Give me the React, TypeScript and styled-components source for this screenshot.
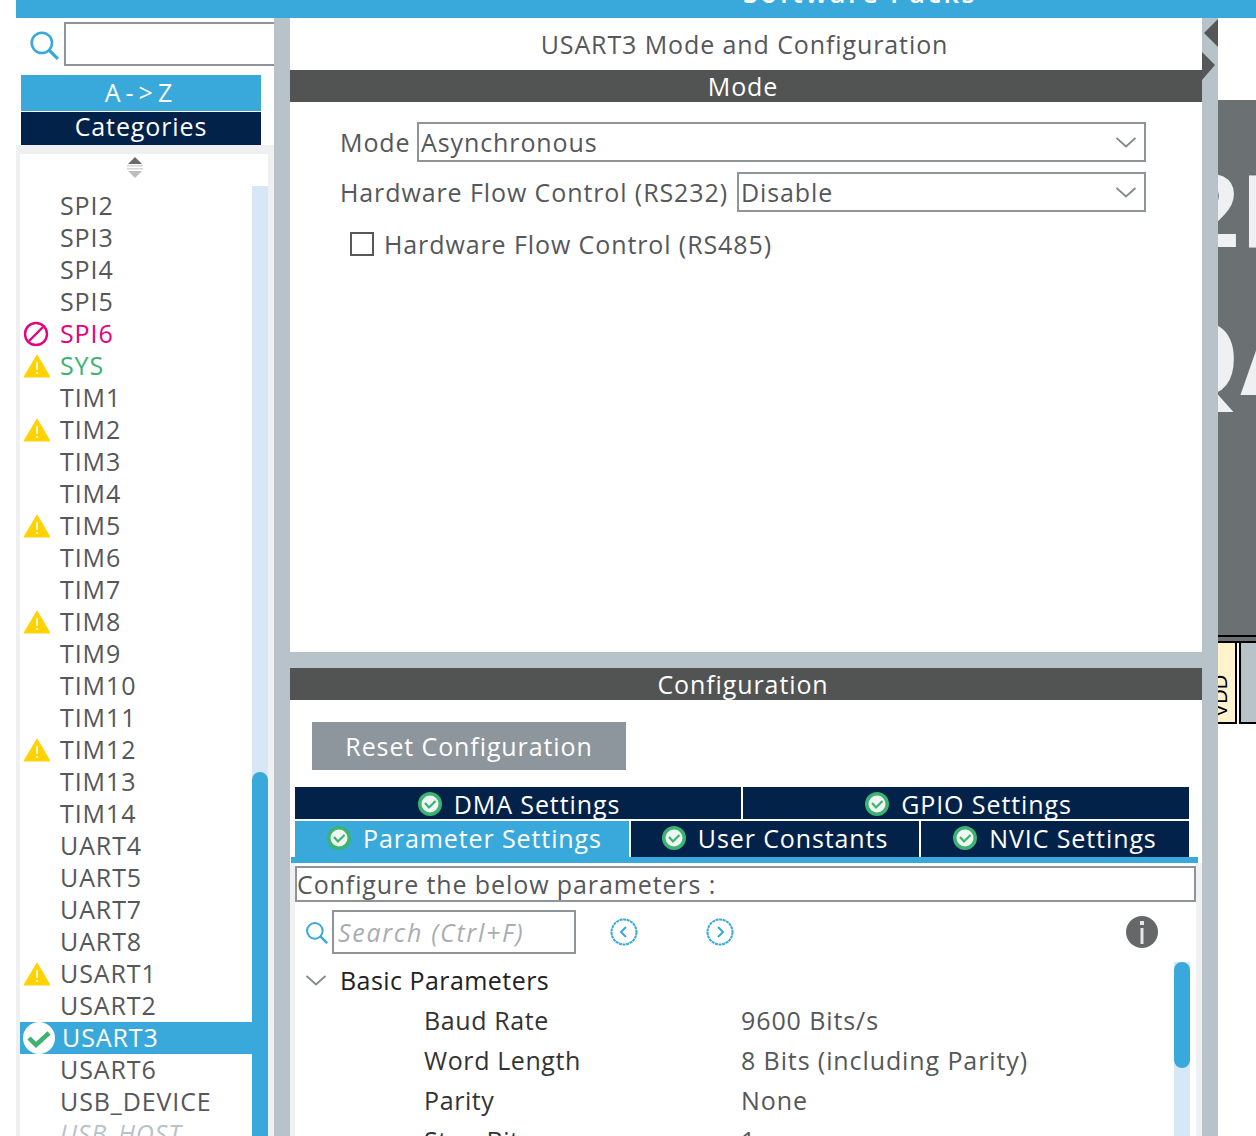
import styled, { createGlobalStyle } from 'styled-components'

const Global = createGlobalStyle`
  html, body {
    margin: 0;
    padding: 0;
    background: #fff;
  }
  * {
    box-sizing: border-box;
  }
  svg {
    flex: none;
  }
`

const BLUE = '#39a9dc'
const NAVY = '#02224a'
const GREY_TEXT = '#555759'
const SPLIT = '#b7c2c9'

const Page = styled.div`
  width: 1256px;
  height: 1136px;
  overflow: hidden;
  padding-left: 16px;
  background: #fff;
  font-family: 'Open Sans', 'Noto Sans', sans-serif;
  font-size: 25px;
  letter-spacing: 0.9px;
  color: ${GREY_TEXT};
`
const TopBar = styled.div`
  height: 18px;
  overflow: hidden;
  background: ${BLUE};
  color: #fff;
  padding-left: 727px;
  font-size: 27px;
  font-weight: 600;
  line-height: 32px;
  letter-spacing: 2.6px;
`
const TopLabel = styled.div`
  margin-top: -23px;
`
const Body = styled.div`
  display: flex;
  height: 1118px;
`
const LeftPanel = styled.div`
  width: 258px;
  flex: none;
  display: flex;
  flex-direction: column;
  overflow: hidden;
`
const SearchRow = styled.div`
  height: 57px;
  display: flex;
  align-items: flex-start;
  padding: 4px 0 0 13px;
  gap: 5px;
`
const SearchIconSlot = styled.div`
  display: flex;
  padding-top: 8px;
`
const SearchBox = styled.div`
  width: 214px;
  height: 44px;
  flex: none;
  border: 2px solid #8f9499;
  background: #fff;
`
const SortButton = styled.div<{ $active?: boolean }>`
  width: 240px;
  margin-left: 5px;
  height: ${(p) => (p.$active ? 36 : 33)}px;
  margin-bottom: ${(p) => (p.$active ? 1 : 0)}px;
  background: ${(p) => (p.$active ? BLUE : NAVY)};
  color: #fff;
  text-align: center;
  line-height: ${(p) => (p.$active ? 34 : 29)}px;
  letter-spacing: ${(p) => (p.$active ? 5 : 0.9)}px;
`
const ListFrame = styled.div`
  flex: 1;
  min-height: 0;
  background: #eff0f2;
  padding: 9px 6px 0 4px;
`
const ListInner = styled.div`
  height: 100%;
  display: flex;
  background: #fff;
`
const ListColumn = styled.div`
  width: 232px;
  flex: none;
`
const SortArrows = styled.div`
  height: 36px;
  display: flex;
  justify-content: center;
  padding: 3px 2px 0 0;
`
const Row = styled.div<{ $selected?: boolean }>`
  height: 32px;
  display: flex;
  align-items: center;
  background: ${(p) => (p.$selected ? BLUE : 'transparent')};
`
const RowIcon = styled.div`
  width: 40px;
  flex: none;
  display: flex;
  padding-left: 3px;
  align-items: center;
`
const RowLabel = styled.span<{ $tone: string }>`
  line-height: 30px;
  margin-bottom: 2px;
  color: ${(p) =>
    p.$tone === 'error'
      ? '#e6007e'
      : p.$tone === 'ok'
        ? '#3cb371'
        : p.$tone === 'selected'
          ? '#fff'
          : p.$tone === 'disabled'
            ? '#b7c2c9'
            : GREY_TEXT};
  font-style: ${(p) => (p.$tone === 'disabled' ? 'italic' : 'normal')};
  margin-left: ${(p) => (p.$tone === 'selected' ? 2 : 0)}px;
`
const ListTrack = styled.div`
  width: 16px;
  flex: none;
  margin-top: 32px;
  background: #d8e7f5;
`
const ListThumb = styled.div`
  height: 400px;
  margin-top: 586px;
  background: ${BLUE};
  border-radius: 8px 8px 0 0;
`
const SplitV = styled.div`
  width: 16px;
  flex: none;
  background: ${SPLIT};
  overflow: hidden;
`
const Center = styled.div`
  width: 912px;
  flex: none;
  display: flex;
  flex-direction: column;
`
const ModePane = styled.div`
  height: 634px;
  flex: none;
`
const PaneTitle = styled.div`
  height: 52px;
  line-height: 52px;
  text-align: center;
  padding-right: 3px;
`
const SectionBar = styled.div`
  height: 32px;
  background: #525453;
  color: #fff;
  text-align: center;
  line-height: 33px;
  padding-right: 6px;
`
const ModeForm = styled.div`
  padding: 20px 56px 0 50px;
`
const FormRow = styled.div`
  height: 40px;
  margin-bottom: 10px;
  display: flex;
  align-items: center;
`
const FormLabel = styled.span<{ $w: number }>`
  width: ${(p) => p.$w}px;
  flex: none;
  white-space: nowrap;
`
const Select = styled.div`
  flex: 1;
  height: 40px;
  border: 2px solid #8f9499;
  padding: 0 8px 0 2px;
  display: flex;
  align-items: center;
  justify-content: space-between;
  line-height: 36px;
`
const CheckRow = styled.div`
  display: flex;
  align-items: center;
  gap: 10px;
  margin: 12px 0 0 10px;
  height: 40px;
`
const CheckBox = styled.div`
  width: 24px;
  height: 24px;
  border: 2px solid #58595b;
  background: #fff;
`
const SplitH = styled.div`
  height: 16px;
  flex: none;
  background: ${SPLIT};
`
const ConfigPane = styled.div`
  flex: 1;
  min-height: 0;
  overflow: hidden;
`
const ResetButton = styled.div`
  width: 314px;
  height: 48px;
  margin: 22px 0 17px 22px;
  background: #8e969d;
  color: #fff;
  line-height: 48px;
  text-align: center;
`
const TabRow = styled.div<{ $gap: number }>`
  display: flex;
  gap: 2px;
  width: 894px;
  margin: 0 0 ${(p) => p.$gap}px 5px;
`
const Tab = styled.div<{ $w: number; $h: number; $active?: boolean; $shift?: number }>`
  width: ${(p) => p.$w}px;
  height: ${(p) => p.$h}px;
  flex: none;
  display: flex;
  align-items: center;
  justify-content: center;
  gap: 12px;
  padding: ${(p) => (p.$h === 32 ? '2px 0 0' : '0 0 2px')};
  padding-left: ${(p) => p.$shift ?? 0}px;
  background: ${(p) => (p.$active ? BLUE : NAVY)};
  color: #fff;
`
const TabRule = styled.div`
  height: 6px;
  width: 907px;
  margin-left: 1px;
  background: ${BLUE};
`
const TabBody = styled.div`
  display: flex;
  flex-direction: column;
  height: 400px;
  background: #fff;
  border-left: 5px solid #f0f1f3;
  border-right: 6px solid #f0f1f3;
  padding-top: 3px;
`
const ParamNote = styled.div`
  height: 36px;
  width: 901px;
  border: 2px solid #8f9499;
  line-height: 33px;
  color: ${GREY_TEXT};
`
const ToolRow = styled.div`
  display: flex;
  align-items: center;
  height: 44px;
  margin-top: 8px;
  padding-left: 10px;
`
const ParamSearch = styled.div`
  width: 244px;
  height: 44px;
  margin-left: 4px;
  border: 2px solid #8f9499;
  padding-left: 4px;
  line-height: 41px;
  color: #a9adb1;
  font-style: italic;
  letter-spacing: 1.7px;
`
const NavIcon = styled.div<{ $ml: number }>`
  margin-left: ${(p) => p.$ml}px;
  display: flex;
`
const TreeArea = styled.div`
  display: flex;
  margin-top: 8px;
  height: 200px;
`
const TreeColumn = styled.div`
  width: 879px;
  flex: none;
`
const TreeHead = styled.div`
  height: 38px;
  display: flex;
  align-items: center;
  padding: 0 0 2px 11px;
  gap: 14px;
  color: #222;
  letter-spacing: 0.45px;
`
const ParamRow = styled.div`
  height: 40px;
  display: flex;
  align-items: center;
  padding-left: 129px;
`
const ParamName = styled.span`
  width: 317px;
  flex: none;
  color: #333;
  letter-spacing: 0.6px;
`
const ParamValue = styled.span``
const TreeTrack = styled.div`
  width: 16px;
  flex: none;
  background: #d8e7f5;
`
const TreeThumb = styled.div`
  height: 106px;
  background: ${BLUE};
  border-radius: 8px;
`
const Canvas = styled.div`
  flex: 1;
  position: relative;
  overflow: hidden;
  background: #fff;
`
const ChipBody = styled.div`
  position: absolute;
  left: 0;
  top: 82px;
  width: 38px;
  height: 535px;
  background: #6b7072;
  overflow: hidden;
`
const ChipText = styled.div<{ $top: number; $left: number }>`
  position: absolute;
  top: ${(p) => p.$top}px;
  left: ${(p) => p.$left}px;
  font-size: 100px;
  line-height: 100px;
  font-weight: 700;
  color: #eff0f2;
  white-space: nowrap;
`
const PinStrip = styled.div`
  position: absolute;
  left: 0;
  top: 617px;
  width: 38px;
  height: 8px;
  border-top: 2px solid #000;
  border-bottom: 2px solid #000;
  background: #6b7072;
`
const Pin = styled.div<{ $left: number; $w: number; $yellow?: boolean }>`
  position: absolute;
  left: ${(p) => p.$left}px;
  top: 625px;
  width: ${(p) => p.$w}px;
  height: 81px;
  border: 2px solid #000;
  border-top-width: 0;
  border-left-width: ${(p) => (p.$yellow ? 0 : 2)}px;
  border-right-width: ${(p) => (p.$yellow ? 2 : 0)}px;
  background: ${(p) => (p.$yellow ? '#fff3cc' : SPLIT)};
  overflow: hidden;
`
const PinLabel = styled.div`
  position: absolute;
  left: -21px;
  top: 43px;
  width: 46px;
  height: 20px;
  text-align: center;
  font-family: 'Liberation Sans', sans-serif;
  font-size: 20px;
  line-height: 20px;
  letter-spacing: 0;
  color: #000;
  transform: rotate(-90deg);
`

const Warning = () => (
  <svg width="27" height="24" viewBox="0 0 27 24">
    <path d="M14 1 L27 23 L1 23 Z" fill="#ffd200" stroke="#ffd200" strokeLinejoin="round" />
    <rect x="13" y="8" width="2" height="8" fill="#fff6c8" />
    <rect x="13" y="18" width="2" height="2" fill="#fff6c8" />
  </svg>
)

const Blocked = () => (
  <svg width="26" height="26" viewBox="0 0 26 26">
    <circle cx="13" cy="13" r="11" fill="none" stroke="#e6007e" strokeWidth="2.4" />
    <path d="M6 20 L20 6" stroke="#e6007e" strokeWidth="2.4" />
  </svg>
)

const Passed = () => (
  <svg width="32" height="32" viewBox="0 0 32 32">
    <circle cx="16" cy="16" r="16" fill="#fff" />
    <path d="M6 16 L13 23 L26 11" fill="none" stroke="#3cb371" strokeWidth="4.5" />
  </svg>
)

const TabCheck = () => (
  <svg width="24" height="24" viewBox="0 0 24 24">
    <circle cx="12" cy="12" r="12" fill="#3cb371" />
    <circle cx="12" cy="12" r="8.5" fill="#eef7f2" />
    <path d="M7 11 L11 15.5 L17.5 9" fill="none" stroke="#3cb371" strokeWidth="2.2" />
  </svg>
)

const Magnifier = ({ size }: { size: number }) => (
  <svg width={size} height={size} viewBox="0 0 28 28">
    <circle cx="12" cy="12" r="9.5" fill="none" stroke="#39a9dc" strokeWidth="2.4" />
    <path d="M19 19 L27 27" stroke="#39a9dc" strokeWidth="3" />
  </svg>
)

const Chevron = () => (
  <svg width="20" height="11" viewBox="0 0 20 11">
    <path d="M0.5 1 L10 9.5 L19.5 1" fill="none" stroke="#85888b" strokeWidth="1.8" />
  </svg>
)

const NavCircle = ({ right }: { right?: boolean }) => (
  <svg width="28" height="28" viewBox="0 0 28 28">
    <circle cx="14" cy="14" r="12.5" fill="none" stroke="#39a9dc" strokeWidth="2" strokeDasharray="3 0.6" />
    <path
      d={right ? 'M12 9 L17 14 L12 19' : 'M16 9 L11 14 L16 19'}
      fill="none"
      stroke="#39a9dc"
      strokeWidth="2"
    />
  </svg>
)

const Info = () => (
  <svg width="32" height="32" viewBox="0 0 32 32">
    <circle cx="16" cy="16" r="16" fill="#666768" />
    <rect x="14" y="5" width="4" height="4" fill="#e6e6e6" />
    <rect x="14.5" y="12" width="3" height="16" fill="#e6e6e6" />
  </svg>
)

const Arrows = () => (
  <svg width="16" height="22" viewBox="0 0 16 22">
    <path d="M8 0 L15 7 H1 Z" fill="#6a6a6a" />
    <rect x="0" y="8" width="16" height="1.5" fill="#d5d5d5" />
    <rect x="0" y="11" width="16" height="1.5" fill="#d5d5d5" />
    <path d="M8 21 L1 14 H15 Z" fill="#bdbdbd" />
  </svg>
)

const SideArrow = ({ right }: { right?: boolean }) => (
  <svg width="16" height="32" viewBox="0 0 16 32" style={{ display: 'block' }}>
    <path d={right ? 'M0 2 L13 15 L0 30 Z' : 'M2 15 L16 1 V29 Z'} fill="#555759" />
  </svg>
)

const peripherals: [string, string][] = [
  ['SPI2', ''],
  ['SPI3', ''],
  ['SPI4', ''],
  ['SPI5', ''],
  ['SPI6', 'error'],
  ['SYS', 'warn-ok'],
  ['TIM1', ''],
  ['TIM2', 'warn'],
  ['TIM3', ''],
  ['TIM4', ''],
  ['TIM5', 'warn'],
  ['TIM6', ''],
  ['TIM7', ''],
  ['TIM8', 'warn'],
  ['TIM9', ''],
  ['TIM10', ''],
  ['TIM11', ''],
  ['TIM12', 'warn'],
  ['TIM13', ''],
  ['TIM14', ''],
  ['UART4', ''],
  ['UART5', ''],
  ['UART7', ''],
  ['UART8', ''],
  ['USART1', 'warn'],
  ['USART2', ''],
  ['USART3', 'selected'],
  ['USART6', ''],
  ['USB_DEVICE', ''],
  ['USB_HOST', 'disabled'],
]

const params = [
  ['Baud Rate', '9600 Bits/s'],
  ['Word Length', '8 Bits (including Parity)'],
  ['Parity', 'None'],
  ['Stop Bits', '1'],
]

const statusIcon = (s: string) => {
  if (s === 'error') return <Blocked />
  if (s === 'warn' || s === 'warn-ok') return <Warning />
  if (s === 'selected') return <Passed />
  return null
}

const App = () => {
  return (
    <Page>
      <Global />
      <TopBar>
        <TopLabel>Software Packs</TopLabel>
      </TopBar>
      <Body>
        <LeftPanel>
          <SearchRow>
            <SearchIconSlot>
              <Magnifier size={30} />
            </SearchIconSlot>
            <SearchBox />
          </SearchRow>
          <SortButton $active>A-&gt;Z</SortButton>
          <SortButton>Categories</SortButton>
          <ListFrame>
            <ListInner>
              <ListColumn>
                <SortArrows>
                  <Arrows />
                </SortArrows>
                {peripherals.map(([name, status]) => (
                  <Row key={name} $selected={status === 'selected'}>
                    <RowIcon>{statusIcon(status)}</RowIcon>
                    <RowLabel $tone={status === 'warn-ok' ? 'ok' : status}>{name}</RowLabel>
                  </Row>
                ))}
              </ListColumn>
              <ListTrack>
                <ListThumb />
              </ListTrack>
            </ListInner>
          </ListFrame>
        </LeftPanel>
        <SplitV />
        <Center>
          <ModePane>
            <PaneTitle>USART3 Mode and Configuration</PaneTitle>
            <SectionBar>Mode</SectionBar>
            <ModeForm>
              <FormRow>
                <FormLabel $w={77}>Mode</FormLabel>
                <Select>
                  Asynchronous
                  <Chevron />
                </Select>
              </FormRow>
              <FormRow>
                <FormLabel $w={397}>Hardware Flow Control (RS232)</FormLabel>
                <Select>
                  Disable
                  <Chevron />
                </Select>
              </FormRow>
              <CheckRow>
                <CheckBox />
                Hardware Flow Control (RS485)
              </CheckRow>
            </ModeForm>
          </ModePane>
          <SplitH />
          <ConfigPane>
            <SectionBar>Configuration</SectionBar>
            <ResetButton>Reset Configuration</ResetButton>
            <TabRow $gap={2}>
              <Tab $w={446} $h={32} $shift={2}>
                <TabCheck />
                DMA Settings
              </Tab>
              <Tab $w={446} $h={32} $shift={5}>
                <TabCheck />
                GPIO Settings
              </Tab>
            </TabRow>
            <TabRow $gap={0}>
              <Tab $w={334} $h={36} $active $shift={5}>
                <TabCheck />
                Parameter Settings
              </Tab>
              <Tab $w={288} $h={36}>
                <TabCheck />
                User Constants
              </Tab>
              <Tab $w={268} $h={36}>
                <TabCheck />
                NVIC Settings
              </Tab>
            </TabRow>
            <TabRule />
            <TabBody>
              <ParamNote>Configure the below parameters :</ParamNote>
              <ToolRow>
                <Magnifier size={23} />
                <ParamSearch>Search (Ctrl+F)</ParamSearch>
                <NavIcon $ml={34}>
                  <NavCircle />
                </NavIcon>
                <NavIcon $ml={68}>
                  <NavCircle right />
                </NavIcon>
                <NavIcon $ml={392}>
                  <Info />
                </NavIcon>
              </ToolRow>
              <TreeArea>
                <TreeColumn>
                  <TreeHead>
                    <Chevron />
                    Basic Parameters
                  </TreeHead>
                  {params.map(([name, value]) => (
                    <ParamRow key={name}>
                      <ParamName>{name}</ParamName>
                      <ParamValue>{value}</ParamValue>
                    </ParamRow>
                  ))}
                </TreeColumn>
                <TreeTrack>
                  <TreeThumb />
                </TreeTrack>
              </TreeArea>
            </TabBody>
          </ConfigPane>
        </Center>
        <SplitV>
          <SideArrow />
          <SideArrow right />
        </SplitV>
        <Canvas>
          <ChipBody>
            <ChipText $top={58} $left={-36}>
              2F
            </ChipText>
            <ChipText $top={206} $left={-58}>
              QA
            </ChipText>
          </ChipBody>
          <PinStrip />
          <Pin $left={0} $w={19} $yellow>
            <PinLabel>VDD</PinLabel>
          </Pin>
          <Pin $left={21} $w={17} />
        </Canvas>
      </Body>
    </Page>
  )
}

export default App
